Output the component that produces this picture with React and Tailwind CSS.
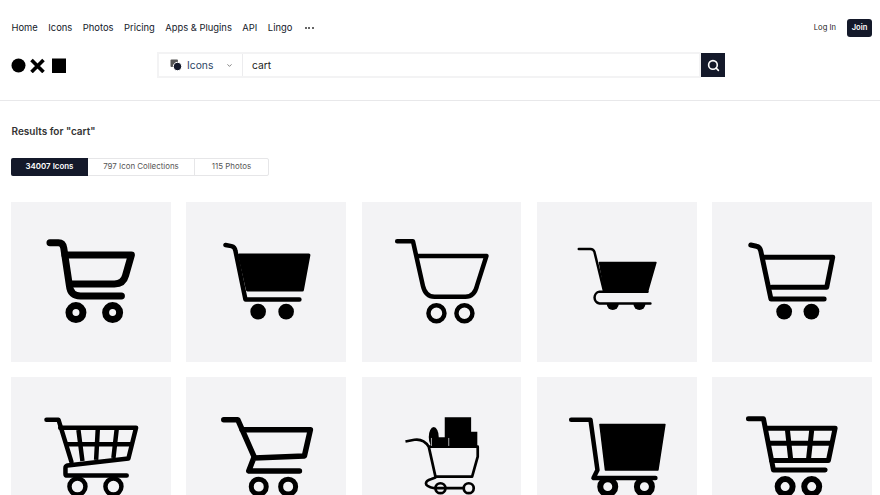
import { ChevronDown, Search } from "lucide-react";

const NAV = ["Home", "Icons", "Photos", "Pricing", "Apps & Plugins", "API", "Lingo"];

const Wheel = ({ x, y, r, w }) => <circle cx={x} cy={y} r={r} strokeWidth={w} fill="none" stroke="#000" />;
const Dot = ({ x, y, r }) => <circle cx={x} cy={y} r={r} fill="#000" stroke="none" />;

const ICONS = [
  <g strokeWidth="7">
    <path d="M38.5 40.7H47Q51.5 40.7 52.3 46L58 84Q59 94 69 94H110" />
    <path d="M53.5 53H120L114 74Q112 82 103 82H60" />
    <Wheel x={64.5} y={110.7} r={7} w={7} />
    <Wheel x={101.2} y={110.7} r={7} w={7} />
  </g>,
  <g strokeWidth="4.5">
    <path d="M39 43L45 44.2Q48.5 45 49 49L59 97.5H113" />
    <path d="M53 53H122.5L116 88H61Z" fill="#000" strokeWidth="3" />
    <Dot x={71.7} y={109.7} r={7.8} />
    <Dot x={99.7} y={109.7} r={7.8} />
  </g>,
  <g strokeWidth="4.5">
    <path d="M34.7 39.3H50.5L60.5 84Q63 94.7 72 94.7H103Q112 94.7 114.5 84L124 54H54.7" />
    <Wheel x={74} y={111.3} r={8} w={4.5} />
    <Wheel x={102} y={111.3} r={8} w={4.5} />
  </g>,
  <g strokeWidth="2.5">
    <path d="M41.3 47H53Q56 47 57 50L66.5 89" />
    <path d="M62 60.5H118.5L110 90H67.5Z" fill="#000" strokeWidth="1.5" />
    <path d="M110 89.7H62A6 6 0 0 0 62 101.5H113" />
    <path d="M69.3 102H81.3A6 6 0 0 1 69.3 102Z" fill="#000" stroke="none" />
    <path d="M96 102H108A6 6 0 0 1 96 102Z" fill="#000" stroke="none" />
  </g>,
  <g strokeWidth="5">
    <path d="M38.3 43L44 44.3Q47.5 45 48.3 49L58.5 97H111.7" />
    <path d="M51 55.3H120.3L114.3 85.3H59.3" strokeLinejoin="round" />
    <Dot x={71.7} y={109.7} r={7.9} />
    <Dot x={99} y={109.7} r={7.9} />
  </g>,
  <g strokeWidth="4.5">
    <path d="M35 42.7H47L60 85" />
    <path d="M48.7 50.7H124.7L117 81.5L56 88.5Q54 89 54 91V97Q54 98.7 56 98.7H115.3" />
    <path d="M67 53L71 84M86.3 53L84.7 83M105.3 52L102 81M54 67.3H120" strokeLinecap="butt" />
    <Wheel x={66} y={109.7} r={8} w={4.5} />
    <Wheel x={102} y={109.7} r={8} w={4.5} />
  </g>,
  <g strokeWidth="5.5">
    <path d="M37.3 42.7H51.3L67.3 79" />
    <path d="M55.7 52.7H124L118 79L67.3 81L62.3 94H113" />
    <Wheel x={72.3} y={109.7} r={7.5} w={5} />
    <Wheel x={101.7} y={109.7} r={7.5} w={5} />
  </g>,
  <g strokeWidth="2.7">
    <path d="M43 64.5L52 62.8Q61 61.5 66.3 69.7L73 99.7H109.7L115.3 79.7V69.7H66.3" strokeLinecap="butt" />
    <ellipse cx="71.3" cy="60" rx="5" ry="10" fill="#000" stroke="none" />
    <path d="M82.3 40.3H108.7V54.7H114.9V69H82.3Z" fill="#000" stroke="none" />
    <path d="M68 60.3H86.3V69.5H68Z" fill="#000" stroke="none" />
    <path d="M69 61V69M86.3 61V69" stroke="#d8d8da" strokeWidth="0.8" strokeLinecap="butt" />
    <path d="M73 100.5L69 102Q63.5 103.5 63.5 106.5Q63.5 109.5 72 111.3H101" />
    <Wheel x={78} y={111.3} r={5} w={2.7} />
    <Wheel x={106.3} y={111.3} r={5} w={2.7} />
  </g>,
  <g strokeWidth="4.5">
    <path d="M33.7 42.7H53L60 93L56 101H118" />
    <path d="M62.5 47.5H127.5L120.5 93H68Z" fill="#000" strokeWidth="1.5" />
    <Wheel x={70.3} y={109.7} r={7.5} w={6} />
    <Wheel x={107} y={109.7} r={7.5} w={6} />
  </g>,
  <g strokeWidth="5">
    <path d="M36 41.7H51L61 93H112.7" />
    <path d="M54.3 51.3H122.7L116 83.5H59" strokeLinejoin="round" />
    <path d="M75 53L78.3 83M99.3 53L96 83M57 66.3H119" strokeLinecap="butt" />
    <Wheel x={72.7} y={109.7} r={7.5} w={6} />
    <Wheel x={99.3} y={109.7} r={7.5} w={6} />
  </g>,
];

function Tile({ children }) {
  return (
    <div className="aspect-square bg-[#f3f3f5]">
      <svg viewBox="-0.5 0 160 160" className="block w-full h-full" fill="none" stroke="#000" strokeLinecap="round" strokeLinejoin="round">
        {children}
      </svg>
    </div>
  );
}

export default function App() {
  return (
    <div className="h-screen overflow-hidden bg-white font-['Inter',sans-serif] text-[#14192a]">
      <header className="h-[101px] border-b border-[#e8e8ea] pl-[11px] pr-[8px] pt-[19px]">
        <div className="flex items-center justify-between h-[18px]">
          <nav className="flex items-center gap-[10.5px] pl-[0.5px] pt-[1px] text-[9.4px]">
            {NAV.map((item) => (
              <a key={item}>{item}</a>
            ))}
            <span className="ml-[2px] flex gap-[1.5px]">
              <i className="w-[2px] h-[2px] rounded-full bg-[#333]" />
              <i className="w-[2px] h-[2px] rounded-full bg-[#333]" />
              <i className="w-[2px] h-[2px] rounded-full bg-[#333]" />
            </span>
          </nav>
          <div className="flex items-center gap-[11px] text-[7.6px]">
            <a className="text-[#222]">Log In</a>
            <button className="w-[25px] h-[18px] rounded-[3px] bg-[#14192a] text-white font-semibold">Join</button>
          </div>
        </div>

        <div className="flex items-center mt-[15px] h-[26px]">
          <svg viewBox="-0.5 0 55 15" className="w-[55px] h-[15px]" fill="#000">
            <circle cx="7" cy="7.5" r="7" />
            <path d="M20 2L32 14M32 2L20 14" stroke="#000" strokeWidth="3.6" />
            <rect x="40.5" y="0.5" width="14" height="14.5" />
          </svg>
          <div className="ml-[91px] flex h-[26px] w-[544px] border-2 border-[#f3f3f4] text-[10.3px]">
            <div className="flex items-center w-[84px] border-r border-[#ececee] pl-[11px] shrink-0">
              <svg viewBox="0 0 12 12" className="w-[12px] h-[12px]">
                <rect x="0.5" y="0.5" width="7.5" height="7.5" rx="1" fill="#555" />
                <circle cx="7.5" cy="7.5" r="4.2" fill="#14192a" stroke="#fff" strokeWidth="1" />
              </svg>
              <span className="ml-[5px] pt-[1px] text-[#2c4463]">Icons</span>
              <ChevronDown className="ml-[13px] w-[7px] h-[7px] text-[#555]" strokeWidth={2.5} />
            </div>
            <span className="flex items-center pl-[9px] pt-[1px] text-[#222]">cart</span>
          </div>
          <button className="flex items-center justify-center w-[24px] h-[24px] bg-[#14192a]">
            <Search className="w-[13px] h-[13px] text-white" strokeWidth={3} />
          </button>
        </div>
      </header>

      <main className="pl-[11px] pr-[8px]">
        <h1 className="mt-[23px] mb-[20px] pl-[0.5px] text-[10px] leading-[14px] font-semibold text-[#333]">Results for "cart"</h1>

        <div className="flex w-[258px] h-[18px] rounded-[2px] border border-[#e6e6e8] text-[7.9px] text-[#555]">
          <div className="flex items-center justify-center w-[77px] -m-px mr-0 rounded-l-[2px] bg-[#14192a] text-white font-semibold">34007 Icons</div>
          <div className="flex items-center justify-center w-[107px] border-r border-[#e6e6e8]">797 Icon Collections</div>
          <div className="flex items-center justify-center flex-1">115 Photos</div>
        </div>

        <div className="mt-[26px] grid grid-cols-5 gap-[15.4px]">
          {ICONS.map((icon, i) => (
            <Tile key={i}>{icon}</Tile>
          ))}
        </div>
      </main>
    </div>
  );
}
